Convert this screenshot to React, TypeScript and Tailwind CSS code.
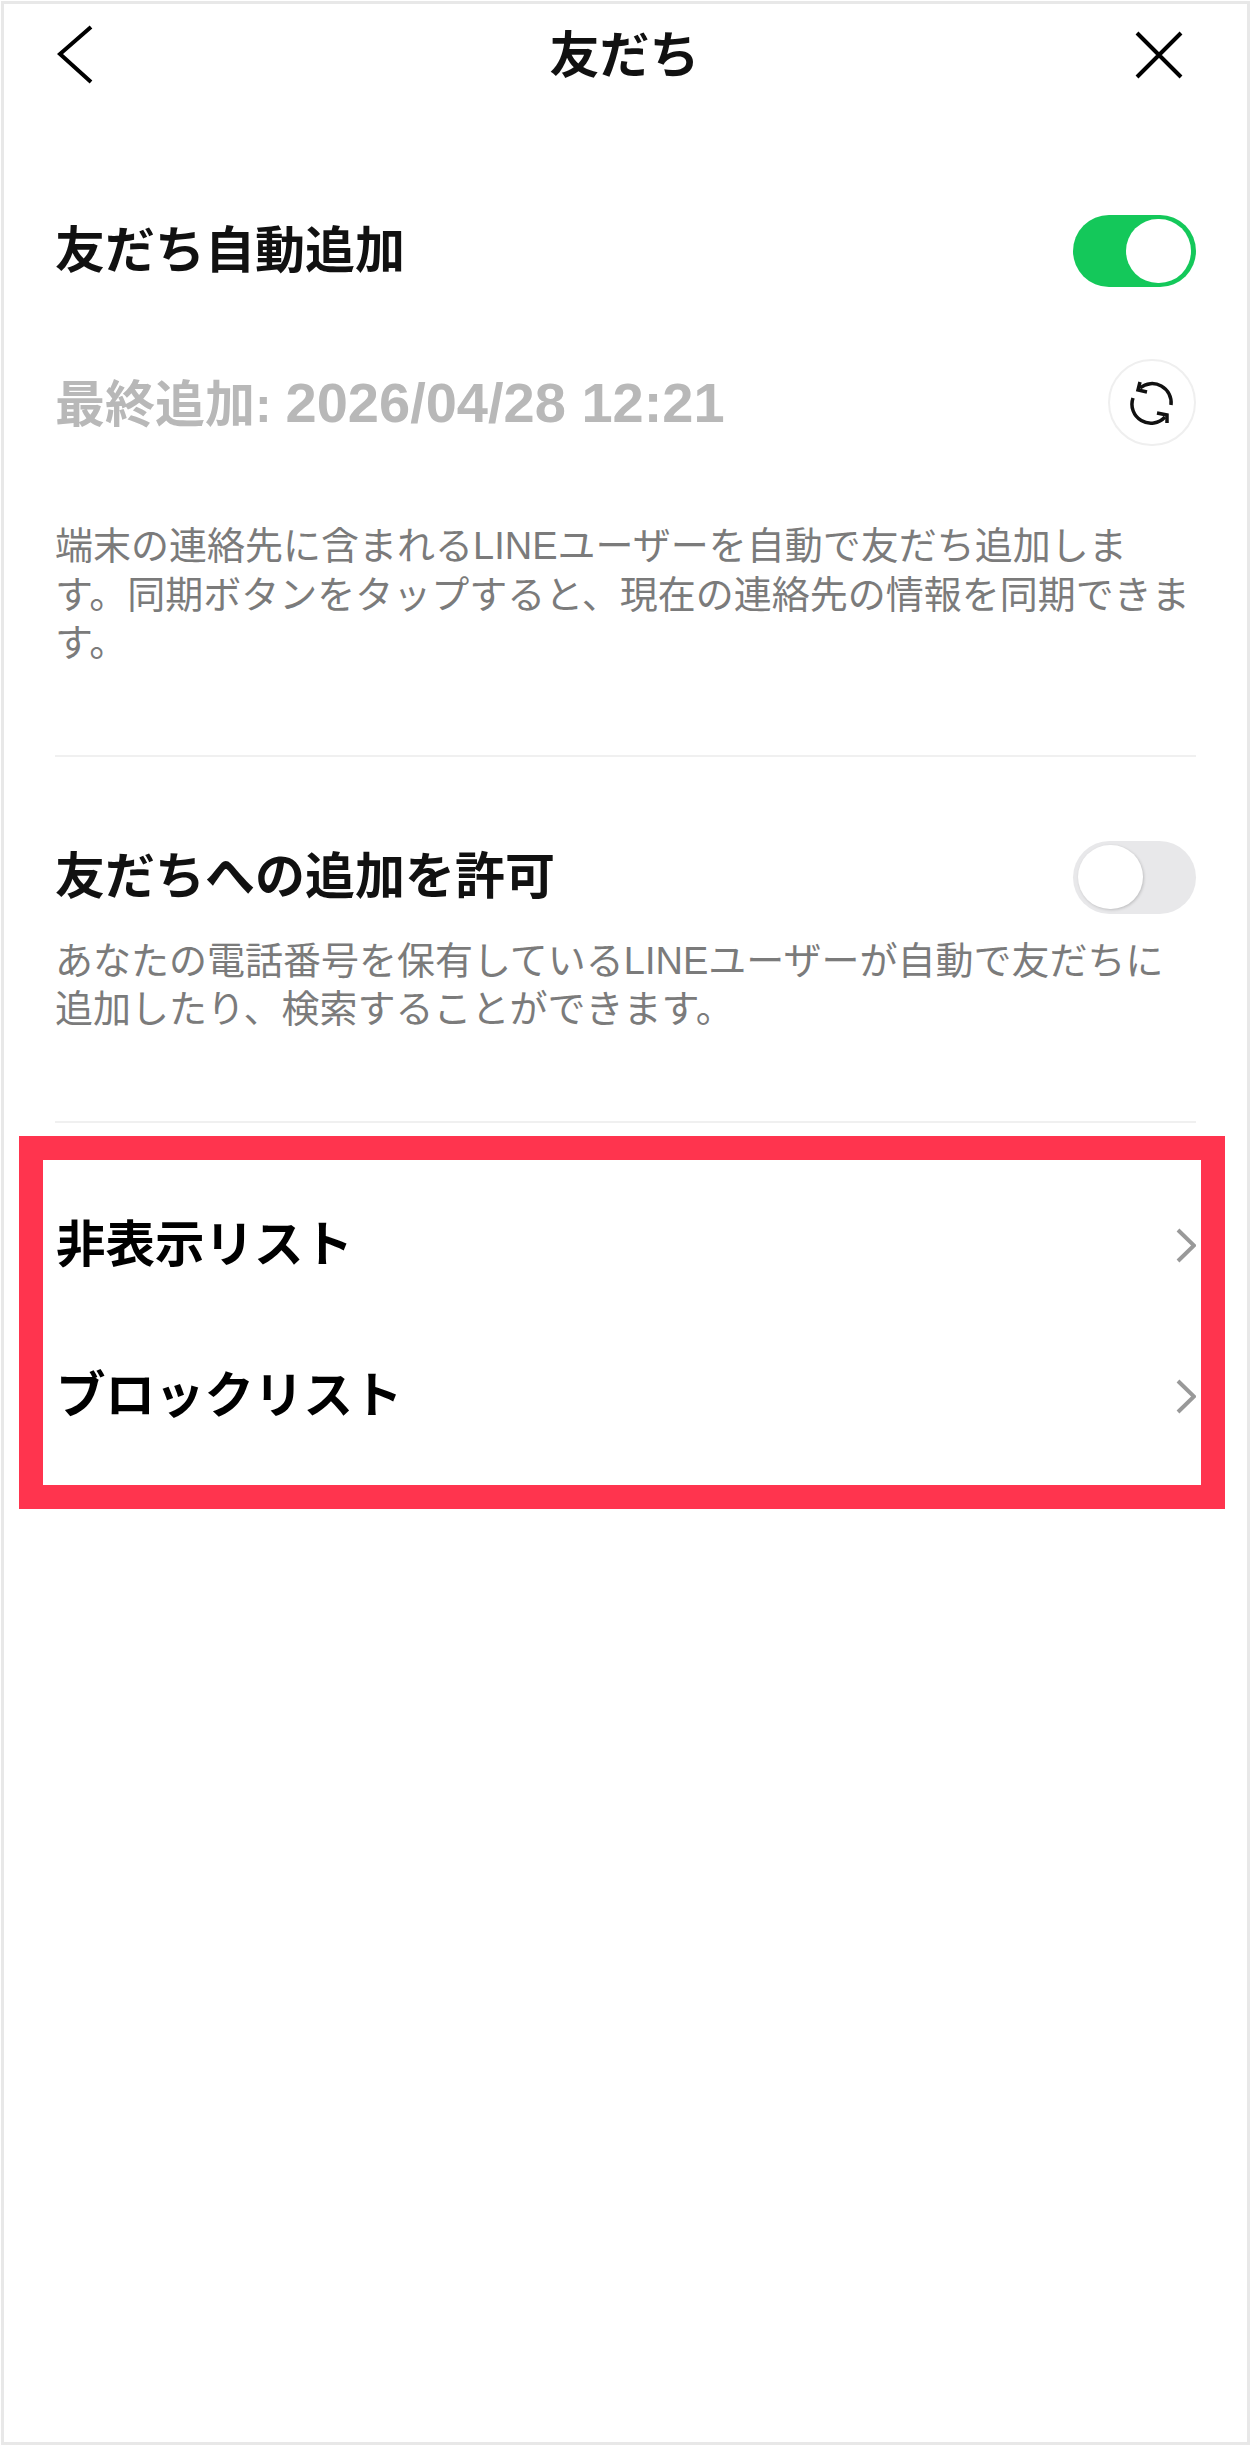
const font = { fontFamily: '"Liberation Sans", "Noto Sans CJK JP", sans-serif' };

function Toggle({ on }: { on: boolean }) {
  return on ? (
    <div className="flex h-[72px] w-[123px] shrink-0 items-center justify-end rounded-full bg-[#14c85a] pr-[5px]">
      <div className="h-[64px] w-[65px] rounded-full bg-white" />
    </div>
  ) : (
    <div className="flex h-[73px] w-[123px] shrink-0 items-center justify-start rounded-full bg-[#e8e8ea] pl-[5px]">
      <div className="h-[64px] w-[65px] rounded-full bg-white shadow-[1px_1px_3px_rgba(0,0,0,0.18)]" />
    </div>
  );
}

function Chevron() {
  return (
    <svg width="20" height="35" viewBox="0 0 20 35" fill="none" className="shrink-0">
      <polyline points="2,2 18,17.5 2,33" stroke="#999999" strokeWidth="4" />
    </svg>
  );
}

function SyncIcon() {
  return (
    <svg width="44" height="46" viewBox="0 0 44 46" fill="none">
      <path d="M10 8 A19 19 0 0 1 41 25" stroke="#111" strokeWidth="3.5" />
      <polyline points="10,2 8,10 17,12" stroke="#111" strokeWidth="3.5" />
      <path d="M3 18 A19 19 0 0 0 35 37" stroke="#111" strokeWidth="3.5" />
      <polyline points="27,33 37,35 37,43" stroke="#111" strokeWidth="3.5" />
    </svg>
  );
}

export default function App() {
  return (
    <div className="h-[2446px] w-[1251px] bg-white p-px" style={font}>
      <div className="h-full w-full border-[3px] border-[#e8e8e8] bg-white text-[#111111]">
        <header className="grid h-[102px] grid-cols-[1fr_auto_1fr] items-center pl-[62px] pr-[64px]">
          <svg width="36" height="60" viewBox="0 0 36 60" fill="none" className="-ml-[9px]">
            <polyline points="34,2 3,29 34,57" stroke="#000" strokeWidth="4" />
          </svg>
          <h1 className="pt-[2px] text-[50px] font-bold leading-none">友だち</h1>
          <svg width="48" height="48" viewBox="0 0 48 48" fill="none" className="justify-self-end">
            <path d="M2 2 L46 46 M46 2 L2 46" stroke="#000" strokeWidth="4" />
          </svg>
        </header>

        <section className="px-[51px]">
          <div className="mt-[109px] flex items-center justify-between">
            <span className="text-[50px] font-bold leading-none">友だち自動追加</span>
            <Toggle on />
          </div>
          <div className="mt-[72px] flex h-[87px] items-center justify-between">
            <span className="text-[50px] font-bold leading-none text-[#b8b8b8]">
              最終追加: <span className="text-[56px]">2026/04/28 12:21</span>
            </span>
            <div className="flex h-[87px] w-[88px] items-center justify-center rounded-full border-2 border-[#efefef]">
              <SyncIcon />
            </div>
          </div>
          <p className="mt-[76px] text-[38px] leading-[48.5px] text-[#7b7b7b]">
            端末の連絡先に含まれるLINEユーザーを自動で友だち追加します。同期ボタンをタップすると、現在の連絡先の情報を同期できます。
          </p>
          <div className="mt-[87px] h-[2px] bg-[#f0f0f0]" />

          <div className="mt-[84px] flex items-center justify-between">
            <span className="text-[50px] font-bold leading-none">友だちへの追加を許可</span>
            <Toggle on={false} />
          </div>
          <p className="mt-[23px] text-[38px] leading-[48.5px] text-[#7b7b7b]">
            あなたの電話番号を保有しているLINEユーザーが自動で友だちに追加したり、検索することができます。
          </p>
          <div className="mt-[87px] h-[2px] bg-[#f0f0f0]" />
        </section>

        <section className="ml-[15px] mt-[13px] h-[373px] w-[1206px] border-[24px] border-[#ff344e] pl-[13px] pr-[5px] pt-[10px] text-black">
          <div className="flex h-[151px] items-center justify-between">
            <span className="text-[49.5px] font-bold leading-none">非表示リスト</span>
            <Chevron />
          </div>
          <div className="flex h-[151px] items-center justify-between">
            <span className="text-[49.5px] font-bold leading-none">ブロックリスト</span>
            <Chevron />
          </div>
        </section>
      </div>
    </div>
  );
}
